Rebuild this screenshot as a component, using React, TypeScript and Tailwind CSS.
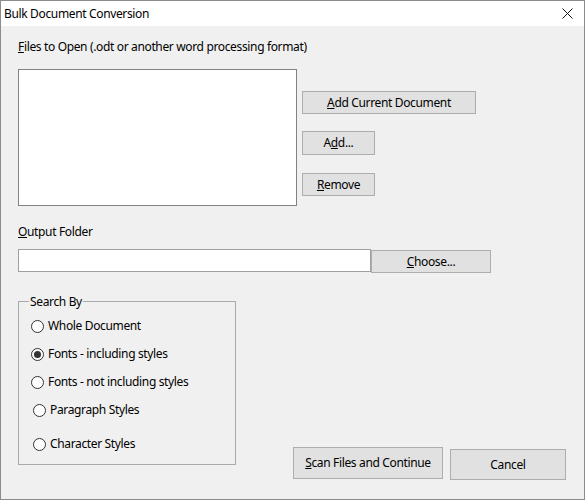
import React from "react";

const font = { fontFamily: '"Noto Sans", "Liberation Sans", sans-serif' };

const Btn = ({ children, className = "" }: { children: React.ReactNode; className?: string }) => (
  <div
    className={`flex items-center justify-center bg-[#e1e1e1] border border-[#adadad] text-[12px] text-black leading-none ${className}`}
  >
    {children}
  </div>
);

const Radio = ({ label, checked = false, className = "" }: { label: string; checked?: boolean; className?: string }) => (
  <div className={`flex items-center h-[16px] ${className}`}>
    <div className="w-[13px] h-[13px] rounded-full border border-[#333333] bg-white flex items-center justify-center">
      {checked && <div className="w-[7px] h-[7px] rounded-full bg-[#333333]" />}
    </div>
    <span className="ml-[4px] text-[12px] leading-[16px]">{label}</span>
  </div>
);

export default function App() {
  return (
    <div
      className="w-[585px] h-[500px] border border-[#8c8c8c] bg-[#f0f0f0] flex flex-col text-black tracking-[-0.35px]"
      style={font}
    >
      {/* title bar */}
      <div className="h-[25px] bg-white flex items-center justify-between pl-[3px] pr-[11px]">
        <span className="text-[12px] leading-[16px]">Bulk Document Conversion</span>
        <svg width="11" height="11" viewBox="0 0 11 11">
          <path d="M0.5 0.5 L10.5 10.5 M10.5 0.5 L0.5 10.5" stroke="#111" strokeWidth="1" />
        </svg>
      </div>

      <div className="pl-[17px] flex flex-col">
        <div className="mt-[13px] text-[12px] leading-[16px]">
          <u>F</u>iles to Open (.odt or another word processing format)
        </div>

        <div className="mt-[14px] flex items-start">
          <div className="w-[279px] h-[137px] bg-white border border-[#828282]" />
          <div className="ml-[5px] flex flex-col items-start">
            <Btn className="mt-[22px] w-[174px] h-[23px]">
              <u>A</u>dd Current Document
            </Btn>
            <Btn className="mt-[17px] w-[73px] h-[24px]">
              A<u>d</u>d...
            </Btn>
            <Btn className="mt-[18px] w-[73px] h-[23px]">
              <u>R</u>emove
            </Btn>
          </div>
        </div>

        <div className="mt-[18px] text-[12px] leading-[16px]">
          <u>O</u>utput Folder
        </div>

        <div className="mt-[9px] flex items-start">
          <div className="w-[353px] h-[23px] bg-white border border-[#a0a0a0]" />
          <Btn className="mt-[1px] w-[120px] h-[23px]">
            <u>C</u>hoose...
          </Btn>
        </div>

        <div className="mt-[28px] flex items-start">
          <div className="relative w-[218px] h-[164px] border border-[#a9a9a9]">
            <span className="absolute left-[10px] top-[-8px] px-[1px] bg-[#f0f0f0] text-[12px] leading-[16px]">
              Search By
            </span>
            <div className="flex flex-col pl-[12px]">
              <Radio className="mt-[16px]" label="Whole Document" />
              <Radio className="mt-[12px]" label="Fonts - including styles" checked />
              <Radio className="mt-[12px]" label="Fonts - not including styles" />
              <Radio className="mt-[12px] ml-[2px]" label="Paragraph Styles" />
              <Radio className="mt-[18px] ml-[2px]" label="Character Styles" />
            </div>
          </div>
          <Btn className="ml-[57px] mt-[146px] w-[150px] h-[32px]">
            <u>S</u>can Files and Continue
          </Btn>
          <Btn className="ml-[7px] mt-[148px] w-[116px] h-[31px]">Cancel</Btn>
        </div>
      </div>
    </div>
  );
}
